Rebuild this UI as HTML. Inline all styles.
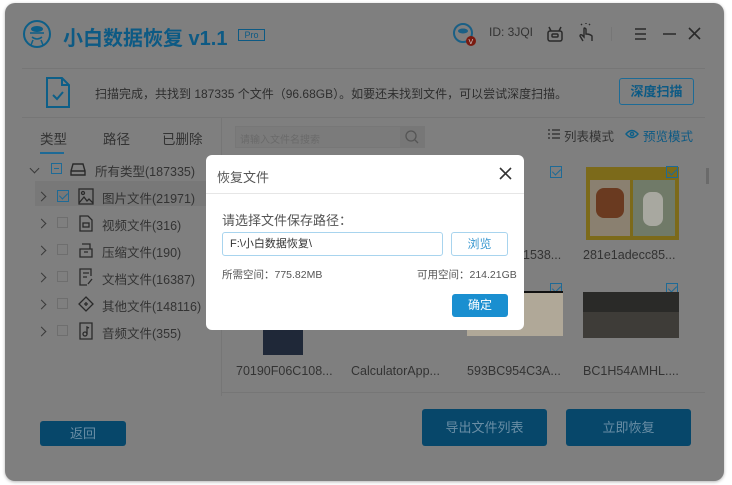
<!DOCTYPE html>
<html><head><meta charset="utf-8"><style>
*{margin:0;padding:0;box-sizing:border-box}
body{width:732px;height:485px;background:#fff;position:relative;overflow:hidden;font-family:"Liberation Sans","Noto Sans CJK SC",sans-serif}
.win{position:absolute;left:5px;top:3px;width:719px;height:478px;background:#7f7f7f;border-radius:10px;box-shadow:0 1px 3px rgba(0,0,0,.3)}
.a{position:absolute;white-space:nowrap}
.t{color:#333;font-size:12.5px}
.ln{position:absolute;background:#767676}
.cb{position:absolute;width:11px;height:11px;border:1px solid #6e6e6e}
.chev{position:absolute;width:7px;height:7px;border-right:1.5px solid #3a3a3a;border-bottom:1.5px solid #3a3a3a;transform:rotate(-45deg)}
.btn{position:absolute;background:#07476a;border-radius:3px;color:#6a8ea5;font-size:13px;text-align:center}
.lbl{position:absolute;font-size:12.5px;color:#333;white-space:nowrap}
.ck{position:absolute;width:12px;height:12px;border:1px solid #1e6a96}
.ck:after{content:"";position:absolute;left:3px;top:0px;width:4px;height:7px;border-right:1.5px solid #1e6a96;border-bottom:1.5px solid #1e6a96;transform:rotate(45deg)}
</style></head><body>
<div class="win"></div>
<svg class="a" style="left:22px;top:19px" width="30" height="30"><circle cx="15" cy="15" r="13" fill="none" stroke="#0d5f88" stroke-width="2"/><ellipse cx="15" cy="10" rx="6" ry="3" fill="#0d5f88"/><path d="M8 14h14M10 18q5 4 10 0M11 21l-2 5M19 21l2 5" stroke="#0d5f88" stroke-width="1.5" fill="none"/></svg>
<div class="a" style="left:63px;top:22px;font-size:20px;font-weight:bold;color:#0d5a84">小白数据恢复 v1.1</div>
<div class="a" style="left:238px;top:29px;width:27px;height:12px;border:1px solid #0d5a84;font-size:9px;color:#0d5a84;text-align:center;line-height:10px">Pro</div>
<svg class="a" style="left:452px;top:22px" width="26" height="26"><circle cx="11" cy="11" r="9" fill="none" stroke="#1a5f85" stroke-width="2"/><ellipse cx="11" cy="9" rx="5" ry="2.5" fill="#1a5f85"/><circle cx="19" cy="19" r="5" fill="#7a1a10"/><text x="16.5" y="22" font-size="7" fill="#ccc">V</text></svg>
<div class="a" style="left:489px;top:25px;font-size:12px;color:#333">ID: 3JQI</div>
<svg class="a" style="left:545px;top:24px" width="20" height="20" fill="none" stroke="#2a2a2a" stroke-width="1.5"><rect x="3" y="7" width="14" height="10" rx="2"/><rect x="7" y="10" width="6" height="3" rx="1"/><path d="M6 7L4 3M14 7l2-4"/></svg>
<svg class="a" style="left:577px;top:22px" width="18" height="22" fill="none" stroke="#2a2a2a" stroke-width="1.4"><path d="M6 19l-3-5q0-2 2-1l2 2V7q0-2 2 0v5q4 0 6 2v5M5 3l-1-1M9 2V1M12 3l1-1"/></svg>
<div class="ln" style="left:611px;top:27px;width:1px;height:14px"></div>
<svg class="a" style="left:633px;top:26px" width="80" height="16" stroke="#2a2a2a" stroke-width="1.6"><path d="M2 3h11M2 8h11M2 13h11M30 8h13M56 2l11 11M67 2L56 13"/></svg>
<div class="ln" style="left:22px;top:68px;width:683px;height:1px"></div>
<svg class="a" style="left:45px;top:76px" width="26" height="33" fill="none" stroke="#0d5f88" stroke-width="2"><path d="M2 2h15l7 7v22H2z M17 2v7h7"/><path d="M8 19l4 4 6-7"/></svg>
<div class="a" style="left:95px;top:85px;font-size:12px;color:#2e2e2e">扫描完成，共找到 187335 个文件（96.68GB）。如要还未找到文件，可以尝试深度扫描。</div>
<div class="a" style="left:619px;top:78px;width:75px;height:27px;border:1px solid #1d6b96;border-radius:3px;color:#0d5a84;font-size:13px;font-weight:bold;text-align:center;line-height:25px">深度扫描</div>
<div class="ln" style="left:22px;top:117px;width:683px;height:1px"></div>
<div class="a t" style="left:40px;top:128px;font-size:13.5px">类型</div>
<div class="a t" style="left:103px;top:128px;font-size:13.5px">路径</div>
<div class="a t" style="left:162px;top:128px;font-size:13.5px">已删除</div>
<div class="a" style="left:40px;top:152px;width:24px;height:2px;background:#1e6a96"></div>
<div class="ln" style="left:221px;top:118px;width:1px;height:278px"></div>
<div class="a" style="left:235px;top:126px;width:190px;height:22px;background:#7b7b7b;border:1px solid #777"></div>
<div class="a" style="left:400px;top:126px;width:25px;height:22px;background:#777"></div>
<svg class="a" style="left:404px;top:129px" width="16" height="16" fill="none" stroke="#555" stroke-width="1.3"><circle cx="7" cy="7" r="5"/><path d="M11 11l3 3"/></svg>
<div class="a" style="left:240px;top:131px;font-size:10px;color:#6a6a6a">请输入文件名搜索</div>
<svg class="a" style="left:547px;top:128px" width="14" height="12" stroke="#2a2a2a" stroke-width="1.3"><path d="M1 2h2M1 6h2M1 10h2M5 2h8M5 6h8M5 10h8"/></svg>
<div class="a" style="left:564px;top:126px;font-size:12.5px;color:#333">列表模式</div>
<svg class="a" style="left:625px;top:129px" width="14" height="10" fill="none" stroke="#0d5f88" stroke-width="1.4"><path d="M1 5q6-7 12 0q-6 7-12 0z"/><circle cx="7" cy="5" r="1.6"/></svg>
<div class="a" style="left:643px;top:126px;font-size:12.5px;color:#0d5a84">预览模式</div>
<div class="chev" style="left:31px;top:165px;transform:rotate(45deg)"></div>
<div class="cb" style="left:51px;top:163px;border-color:#1e6a96"><div style="position:absolute;left:2px;top:4px;width:5px;height:1px;background:#1e6a96"></div></div>
<svg class="a" style="left:70px;top:161px" width="16" height="16" fill="none" stroke="#2a2a2a" stroke-width="1.4"><path d="M3 3h10l2 7v4H1v-4z M1 10h14"/></svg>
<div class="a t" style="left:95px;top:161px">所有类型(187335)</div>
<div class="a" style="left:35px;top:181px;width:186px;height:25px;background:#787878"></div>
<div class="chev" style="left:38px;top:193px"></div><div class="ck" style="left:57px;top:190px"></div>
<svg class="a" style="left:78px;top:188px" width="16" height="17" fill="none" stroke="#2a2a2a" stroke-width="1.3"><rect x="1" y="1" width="14" height="15"/><circle cx="5" cy="5" r="1.5"/><path d="M1 15l5-6 3 4 2-2 4 4"/></svg>
<div class="a t" style="left:102px;top:188px">图片文件(21971)</div>
<div class="chev" style="left:38px;top:220px"></div><div class="cb" style="left:57px;top:217px"></div>
<svg class="a" style="left:79px;top:215px" width="14" height="17" fill="none" stroke="#2a2a2a" stroke-width="1.3"><path d="M1 1h8l4 4v11H1z"/><rect x="4" y="8" width="6" height="4"/></svg>
<div class="a t" style="left:102px;top:215px">视频文件(316)</div>
<div class="chev" style="left:38px;top:247px"></div><div class="cb" style="left:57px;top:244px"></div>
<svg class="a" style="left:78px;top:242px" width="16" height="17" fill="none" stroke="#2a2a2a" stroke-width="1.3"><path d="M4 2h8v5M2 7h12v8H2zM6 10h4"/></svg>
<div class="a t" style="left:102px;top:242px">压缩文件(190)</div>
<div class="chev" style="left:38px;top:274px"></div><div class="cb" style="left:57px;top:271px"></div>
<svg class="a" style="left:79px;top:268px" width="14" height="18" fill="none" stroke="#2a2a2a" stroke-width="1.3"><path d="M12 8V1H1v16h7M4 5h6M4 9h4M9 16l4-5"/></svg>
<div class="a t" style="left:102px;top:269px">文档文件(16387)</div>
<div class="chev" style="left:38px;top:301px"></div><div class="cb" style="left:57px;top:298px"></div>
<svg class="a" style="left:78px;top:296px" width="16" height="16" fill="none" stroke="#2a2a2a" stroke-width="1.3"><path d="M8 1l7 7-7 7-7-7z M8 6v4M6 8h4"/></svg>
<div class="a t" style="left:102px;top:296px">其他文件(148116)</div>
<div class="chev" style="left:38px;top:328px"></div><div class="cb" style="left:57px;top:325px"></div>
<svg class="a" style="left:79px;top:322px" width="14" height="18" fill="none" stroke="#2a2a2a" stroke-width="1.3"><path d="M1 1h12v16H1z"/><circle cx="6" cy="12" r="2"/><path d="M8 12V5l2 1"/></svg>
<div class="a t" style="left:102px;top:323px">音频文件(355)</div>
<div class="ck" style="left:550px;top:166px"></div>
<div class="a" style="left:586px;top:167px;width:93px;height:73px;background:#7c6a1a"></div>
<div class="a" style="left:590px;top:180px;width:40px;height:56px;background:#8a8070"></div>
<div class="a" style="left:596px;top:188px;width:28px;height:30px;background:#6a3a20;border-radius:8px"></div>
<div class="a" style="left:633px;top:180px;width:42px;height:56px;background:#707a68"></div>
<div class="a" style="left:643px;top:192px;width:20px;height:34px;background:#a8a8a0;border-radius:8px"></div>
<div class="ck" style="left:666px;top:166px"></div>
<div class="lbl" style="left:583px;top:248px">281e1adecc85...</div>
<div class="lbl" style="left:523px;top:248px">1538...</div>
<div class="ck" style="left:550px;top:283px"></div>
<div class="ck" style="left:666px;top:283px"></div>
<div class="a" style="left:467px;top:292px;width:96px;height:44px;background:#b0a898"></div>
<div class="a" style="left:467px;top:291px;width:96px;height:2px;background:#111"></div>
<div class="a" style="left:583px;top:292px;width:96px;height:46px;background:#2a2a28"></div>
<div class="a" style="left:583px;top:312px;width:96px;height:26px;background:#3e3c38"></div>
<div class="a" style="left:263px;top:329px;width:40px;height:26px;background:#1f2838"></div>
<div class="lbl" style="left:236px;top:364px">70190F06C108...</div>
<div class="lbl" style="left:351px;top:364px">CalculatorApp...</div>
<div class="lbl" style="left:467px;top:364px">593BC954C3A...</div>
<div class="lbl" style="left:583px;top:364px">BC1H54AMHL....</div>
<div class="a" style="left:706px;top:168px;width:3px;height:16px;background:#6a6a6a"></div>
<div class="ln" style="left:222px;top:392px;width:483px;height:1px"></div>
<div class="btn" style="left:40px;top:421px;width:86px;height:25px;line-height:25px">返回</div>
<div class="btn" style="left:422px;top:409px;width:125px;height:37px;line-height:37px">导出文件列表</div>
<div class="btn" style="left:566px;top:409px;width:125px;height:37px;line-height:37px">立即恢复</div>
<div class="a" style="left:206px;top:155px;width:318px;height:175px;background:#fff;border-radius:6px"></div>
<div class="a" style="left:217px;top:167px;font-size:13px;color:#555">恢复文件</div>
<svg class="a" style="left:499px;top:167px" width="13" height="13" stroke="#333" stroke-width="1.6"><path d="M1 1l11 11M12 1L1 12"/></svg>
<div class="a" style="left:206px;top:193px;width:318px;height:1px;background:#e6e6e6"></div>
<div class="a" style="left:222px;top:210px;font-size:13px;color:#555">请选择文件保存路径：</div>
<div class="a" style="left:222px;top:232px;width:221px;height:24px;border:1px solid #a8d4ee;border-radius:3px;font-size:11px;color:#333;padding-left:7px;line-height:22px">F:\小白数据恢复\</div>
<div class="a" style="left:451px;top:232px;width:57px;height:24px;border:1px solid #a8d4ee;border-radius:3px;font-size:12px;color:#3a98d0;text-align:center;line-height:22px">浏览</div>
<div class="a" style="left:222px;top:267px;font-size:10.5px;color:#555">所需空间：775.82MB</div>
<div class="a" style="left:417px;top:267px;font-size:10.5px;color:#555">可用空间：214.21GB</div>
<div class="a" style="left:452px;top:294px;width:56px;height:23px;background:#1a8fd0;border-radius:3px;font-size:12px;color:#fff;text-align:center;line-height:23px">确定</div>
</body></html>
